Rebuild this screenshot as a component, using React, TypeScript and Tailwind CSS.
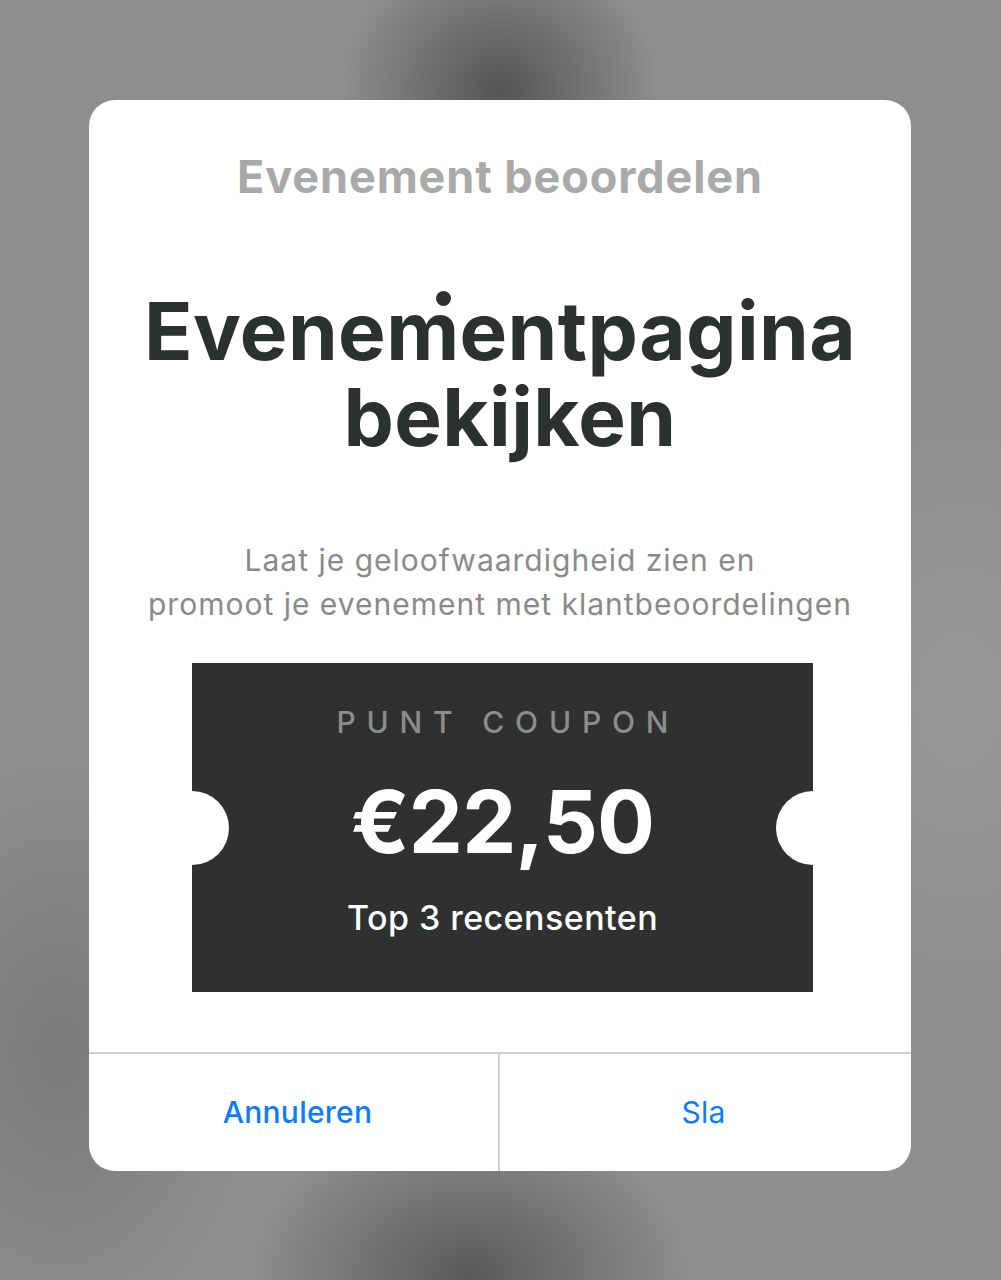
import React from "react";

export default function App() {
  return (
    <div
      className="relative w-[1001px] h-[1280px] overflow-hidden bg-[#8e8e8e]"
      style={{ fontFamily: "Inter, 'Noto Sans', sans-serif" }}
    >
      <div className="absolute inset-0 bg-[radial-gradient(ellipse_160px_150px_at_500px_90px,#555555_0%,rgba(85,85,85,0)_100%)]" />
      <div className="absolute inset-0 bg-[radial-gradient(ellipse_220px_160px_at_470px_1275px,#5a5a5a_0%,rgba(90,90,90,0)_100%)]" />
      <div className="absolute inset-0 bg-[radial-gradient(ellipse_200px_300px_at_60px_1050px,#7a7a7a_0%,rgba(122,122,122,0)_100%)]" />
      <div className="absolute inset-0 bg-[radial-gradient(ellipse_200px_300px_at_960px_700px,#999999_0%,rgba(153,153,153,0)_100%)]" />

      <div className="relative pt-[100px] pl-[89px] flex">
        <div className="relative w-[822px] bg-white rounded-[26px] overflow-hidden flex flex-col items-center">
          <div className="pt-[50px] text-[45px] leading-[54px] font-bold text-[#a9a9a9] tracking-[0.9px]">
            Evenement beoordelen
          </div>
          <div className="mt-[84px] flex flex-col items-center text-[80px] leading-[86px] font-bold text-[#2d3030] tracking-[0.4px]">
            <span>Evenementpagina</span>
            <span className="pl-[20px]">bekijken</span>
          </div>
          <div className="absolute left-[347px] top-[191px] w-[15px] h-[15px] rounded-full bg-[#2d3030]" />
          <div className="mt-[78px] text-center text-[30px] leading-[44px] text-[#8a8a8a] tracking-[1px]">
            Laat je geloofwaardigheid zien en
            <br />
            promoot je evenement met klantbeoordelingen
          </div>
          <div className="relative mt-[37px] ml-[5px] w-[621px] h-[329px] bg-[#2f3131] flex flex-col items-center overflow-hidden">
            <div className="absolute left-[-37px] top-[128px] w-[74px] h-[74px] rounded-full bg-white" />
            <div className="absolute right-[-37px] top-[128px] w-[74px] h-[74px] rounded-full bg-white" />
            <div className="pt-[41px] text-[30px] leading-[36px] font-medium text-[#8c8c8c] tracking-[0.36em] pl-[0.36em]">
              PUNT COUPON
            </div>
            <div className="mt-[39px] text-[86px] leading-[86px] font-bold text-white tracking-[-0.8px]">
              €22,50
            </div>
            <div className="mt-[33px] text-[34px] leading-[40px] font-medium text-white tracking-[0.45px]">
              Top 3 recensenten
            </div>
          </div>
          <div className="mt-[60px] w-full border-t-2 border-[#cfcfcf] grid grid-cols-2 h-[119px]">
            <div className="flex items-center justify-center pl-[8px] border-r-2 border-[#cfcfcf] text-[30px] font-medium text-[#0a7cff] tracking-[0.25px]">
              Annuleren
            </div>
            <div className="flex items-center justify-center pr-[4px] text-[30px] text-[#0a7cff] tracking-[0.25px]">
              Sla
            </div>
          </div>
        </div>
      </div>
    </div>
  );
}
